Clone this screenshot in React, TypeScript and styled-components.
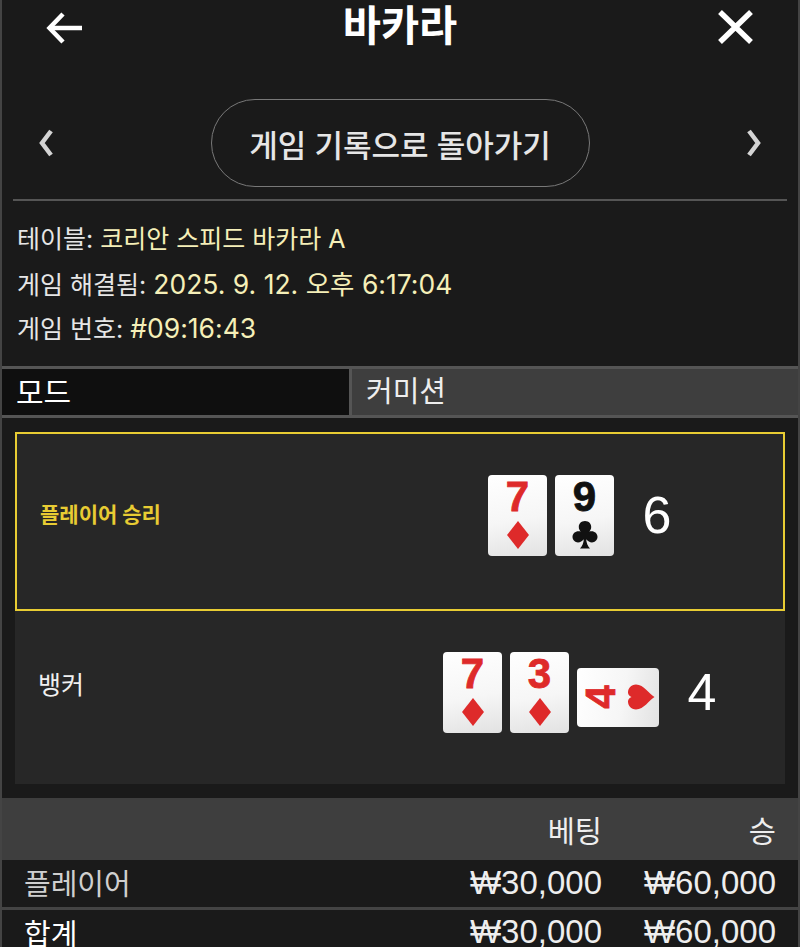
import styled, { createGlobalStyle } from 'styled-components';

const GlobalStyle = createGlobalStyle`
  html, body {
    margin: 0;
    padding: 0;
    background: #1a1a1a;
    overflow: hidden;
  }
  * {
    box-sizing: border-box;
  }
`;

const Page = styled.div`
  width: 800px;
  height: 947px;
  overflow: hidden;
  background: #1a1a1a;
  border-left: 2px solid #444;
  border-right: 2px solid #444;
  font-family: Inter, 'Noto Sans CJK KR', sans-serif;
  color: #fff;
`;

const Header = styled.header`
  height: 52px;
  padding: 0 42px 0 42px;
  display: flex;
  align-items: center;
  justify-content: space-between;
`;

const Title = styled.h1`
  margin: 0;
  font-size: 41.5px;
  font-weight: 700;
  line-height: 52px;
`;

const IconButton = styled.div`
  width: 42px;
  height: 42px;
  display: flex;
  align-items: center;
  justify-content: center;
`;

const NavRow = styled.nav`
  margin-top: 47px;
  padding: 0 30px;
  height: 88px;
  display: flex;
  align-items: center;
  justify-content: space-between;
`;

const BackToHistory = styled.div`
  width: 379px;
  height: 88px;
  border: 1.5px solid #787878;
  border-radius: 44px;
  display: flex;
  align-items: center;
  justify-content: center;
  font-size: 31px;
  font-weight: 500;
  color: #e6e6e6;
`;

const Divider = styled.div`
  margin: 12px 11px 0;
  height: 2px;
  background: #555;
`;

const Info = styled.div`
  padding: 16px 0 15px 15px;
`;

const InfoLine = styled.div`
  height: 44.5px;
  font-size: 25px;
  line-height: 44.5px;
  color: #e6e6e6;
`;

const InfoValue = styled.span<{ $numeric?: boolean }>`
  color: #f5efb8;
  font-size: ${(p) => (p.$numeric ? '26.5px' : '25px')};
`;

const Tabs = styled.div`
  height: 52px;
  display: flex;
  border-top: 3px solid #555;
  border-bottom: 3px solid #555;
`;

const Tab = styled.div<{ $active?: boolean }>`
  width: ${(p) => (p.$active ? '347px' : 'auto')};
  flex: ${(p) => (p.$active ? 'none' : '1')};
  padding-left: 14px;
  background: ${(p) => (p.$active ? '#0f0f0f' : '#3e3e3e')};
  border-left: ${(p) => (p.$active ? 'none' : '3px solid #555')};
  color: ${(p) => (p.$active ? '#fff' : '#eee')};
  font-size: ${(p) => (p.$active ? '30px' : '29px')};
  line-height: 46px;
`;

const Results = styled.section`
  margin: 14px 13px 14px;
  background: #272727;
`;

const ResultRow = styled.div<{ $winner?: boolean }>`
  height: ${(p) => (p.$winner ? '179px' : '173px')};
  display: grid;
  grid-template-columns: 360px 410px;
  align-items: center;
  padding-bottom: ${(p) => (p.$winner ? '12px' : '10px')};
  outline: ${(p) => (p.$winner ? '2px solid #e8cc33' : 'none')};
  outline-offset: -2px;
`;

const ResultLabel = styled.div<{ $winner?: boolean }>`
  padding-left: ${(p) => (p.$winner ? '25px' : '23px')};
  margin-bottom: ${(p) => (p.$winner ? '4px' : '18px')};
  color: ${(p) => (p.$winner ? '#e8cc33' : '#f0f0f0')};
  font-size: ${(p) => (p.$winner ? '21px' : '25px')};
  font-weight: ${(p) => (p.$winner ? 700 : 400)};
`;

const Hand = styled.div`
  display: flex;
  align-items: flex-start;
  justify-content: center;
  gap: 8px;
`;

const Card = styled.div<{ $sideways?: boolean }>`
  width: ${(p) => (p.$sideways ? '82px' : '59px')};
  height: ${(p) => (p.$sideways ? '59px' : '81px')};
  margin-top: ${(p) => (p.$sideways ? '16px' : '0')};
  padding-top: ${(p) => (p.$sideways ? '0' : '5px')};
  padding-left: ${(p) => (p.$sideways ? '3px' : '0')};
  border-radius: 4px;
  background: linear-gradient(${(p) => (p.$sideways ? '100deg' : '170deg')}, #ffffff 0%, #f6f6f6 55%, #e2e2e2 100%);
  display: flex;
  flex-direction: ${(p) => (p.$sideways ? 'row' : 'column')};
  align-items: center;
  justify-content: ${(p) => (p.$sideways ? 'center' : 'flex-start')};
  gap: ${(p) => (p.$sideways ? '12px' : '6px')};
`;

const Rank = styled.span<{ $red?: boolean; $sideways?: boolean }>`
  display: block;
  width: 30px;
  text-align: center;
  font-family: 'Liberation Sans', Arial, sans-serif;
  font-weight: 700;
  font-size: 42px;
  line-height: 34px;
  height: 34px;
  color: ${(p) => (p.$red ? '#de2a2a' : '#111')};
  -webkit-text-stroke: 0.8px ${(p) => (p.$red ? '#de2a2a' : '#111')};
  transform: ${(p) => (p.$sideways ? 'rotate(-90deg)' : 'none')};
`;

const SuitIcon = styled.svg<{ $sideways?: boolean }>`
  display: block;
  width: 26px;
  height: 30px;
  transform: ${(p) => (p.$sideways ? 'rotate(-90deg)' : 'none')};
`;

const Score = styled.div`
  margin-left: 20px;
  width: 30px;
  text-align: center;
  font-size: 52px;
  font-family: 'Liberation Sans', Arial, sans-serif;
  line-height: 81px;
`;

const TableHead = styled.div`
  height: 62px;
  background: #3e3e3e;
  display: grid;
  grid-template-columns: 1fr 170px 174px;
  align-items: center;
  padding-right: 22px;
  font-size: 29.5px;
  color: #f0f0f0;
`;

const TableRow = styled.div<{ $total?: boolean }>`
  height: ${(p) => (p.$total ? '40px' : '47px')};
  display: grid;
  grid-template-columns: 1fr 170px 174px;
  align-items: ${(p) => (p.$total ? 'start' : 'center')};
  padding: 0 22px;
  font-size: 29px;
  line-height: 44px;
  color: ${(p) => (p.$total ? '#fff' : '#cfcfcf')};
  border-top: ${(p) => (p.$total ? '3px solid #444' : 'none')};
`;

const RowLabel = styled.div`
  padding-top: 3px;
`;

const Amount = styled.div`
  text-align: right;
  color: #eee;
`;

const Money = styled(Amount)`
  font-family: 'Liberation Sans', Arial, sans-serif;
  font-size: 33px;
`;

const suits = {
  diamond: 'M13 1 L24 15 L13 29 L2 15 Z',
  heart:
    'M13 28.5 C10 23 0.5 18 0.5 10 C0.5 5 4.5 2 8.5 2 C10.5 2 12.5 3.5 13 5.5 C13.5 3.5 15.5 2 17.5 2 C21.5 2 25.5 5 25.5 10 C25.5 18 16 23 13 28.5 Z',
  club:
    'M13 1 C9 1 6.8 3.8 6.8 7 C6.8 9 7.6 10.4 8.8 11.6 C4.4 10.2 0.5 13 0.5 16.8 C0.5 20 3.2 22.4 6 22.4 C8.2 22.4 10.2 21.2 11.8 19.2 C11.6 22.8 10.4 25.6 8 28.6 L18 28.6 C15.6 25.6 14.4 22.8 14.2 19.2 C15.8 21.2 17.8 22.4 20 22.4 C22.8 22.4 25.5 20 25.5 16.8 C25.5 13 21.6 10.2 17.2 11.6 C18.4 10.4 19.2 9 19.2 7 C19.2 3.8 17 1 13 1 Z',
};

type Suit = keyof typeof suits;

function PlayingCard({ rank, suit, sideways }: { rank: string; suit: Suit; sideways?: boolean }) {
  const red = suit !== 'club';
  return (
    <Card $sideways={sideways}>
      <Rank $red={red} $sideways={sideways}>{rank}</Rank>
      <SuitIcon viewBox="0 0 26 30" $sideways={sideways}>
        <path d={suits[suit]} fill={red ? '#de2a2a' : '#111'} />
      </SuitIcon>
    </Card>
  );
}

export default function App() {
  return (
    <>
      <GlobalStyle />
      <Page>
        <Header>
          <IconButton>
            <svg width="42" height="42" viewBox="0 0 42 42" fill="none" stroke="#fff" strokeWidth="4.5">
              <path d="M38 23 H6" />
              <path d="M19 9 L5.5 23 L19 37" />
            </svg>
          </IconButton>
          <Title>바카라</Title>
          <IconButton>
            <svg width="42" height="42" viewBox="0 0 42 42" fill="none" stroke="#fff" strokeWidth="5.5">
              <path d="M6 7 L37 37 M37 7 L6 37" />
            </svg>
          </IconButton>
        </Header>
        <NavRow>
          <svg width="32" height="32" viewBox="0 0 32 32" fill="none" stroke="#d4d4d4" strokeWidth="4.5">
            <path d="M19 4 L10 16 L19 28" />
          </svg>
          <BackToHistory>게임 기록으로 돌아가기</BackToHistory>
          <svg width="32" height="32" viewBox="0 0 32 32" fill="none" stroke="#d4d4d4" strokeWidth="4.5">
            <path d="M13 4 L22 16 L13 28" />
          </svg>
        </NavRow>
        <Divider />
        <Info>
          <InfoLine>테이블: <InfoValue>코리안 스피드 바카라 A</InfoValue></InfoLine>
          <InfoLine>게임 해결됨: <InfoValue $numeric>2025. 9. 12. 오후 6:17:04</InfoValue></InfoLine>
          <InfoLine>게임 번호: <InfoValue $numeric>#09:16:43</InfoValue></InfoLine>
        </Info>
        <Tabs>
          <Tab $active>모드</Tab>
          <Tab>커미션</Tab>
        </Tabs>
        <Results>
          <ResultRow $winner>
            <ResultLabel $winner>플레이어 승리</ResultLabel>
            <Hand>
              <PlayingCard rank="7" suit="diamond" />
              <PlayingCard rank="9" suit="club" />
              <Score>6</Score>
            </Hand>
          </ResultRow>
          <ResultRow>
            <ResultLabel>뱅커</ResultLabel>
            <Hand>
              <PlayingCard rank="7" suit="diamond" />
              <PlayingCard rank="3" suit="diamond" />
              <PlayingCard rank="4" suit="heart" sideways />
              <Score>4</Score>
            </Hand>
          </ResultRow>
        </Results>
        <TableHead>
          <div />
          <Amount>베팅</Amount>
          <Amount>승</Amount>
        </TableHead>
        <TableRow>
          <RowLabel>플레이어</RowLabel>
          <Money>₩30,000</Money>
          <Money>₩60,000</Money>
        </TableRow>
        <TableRow $total>
          <RowLabel>합계</RowLabel>
          <Money>₩30,000</Money>
          <Money>₩60,000</Money>
        </TableRow>
      </Page>
    </>
  );
}
